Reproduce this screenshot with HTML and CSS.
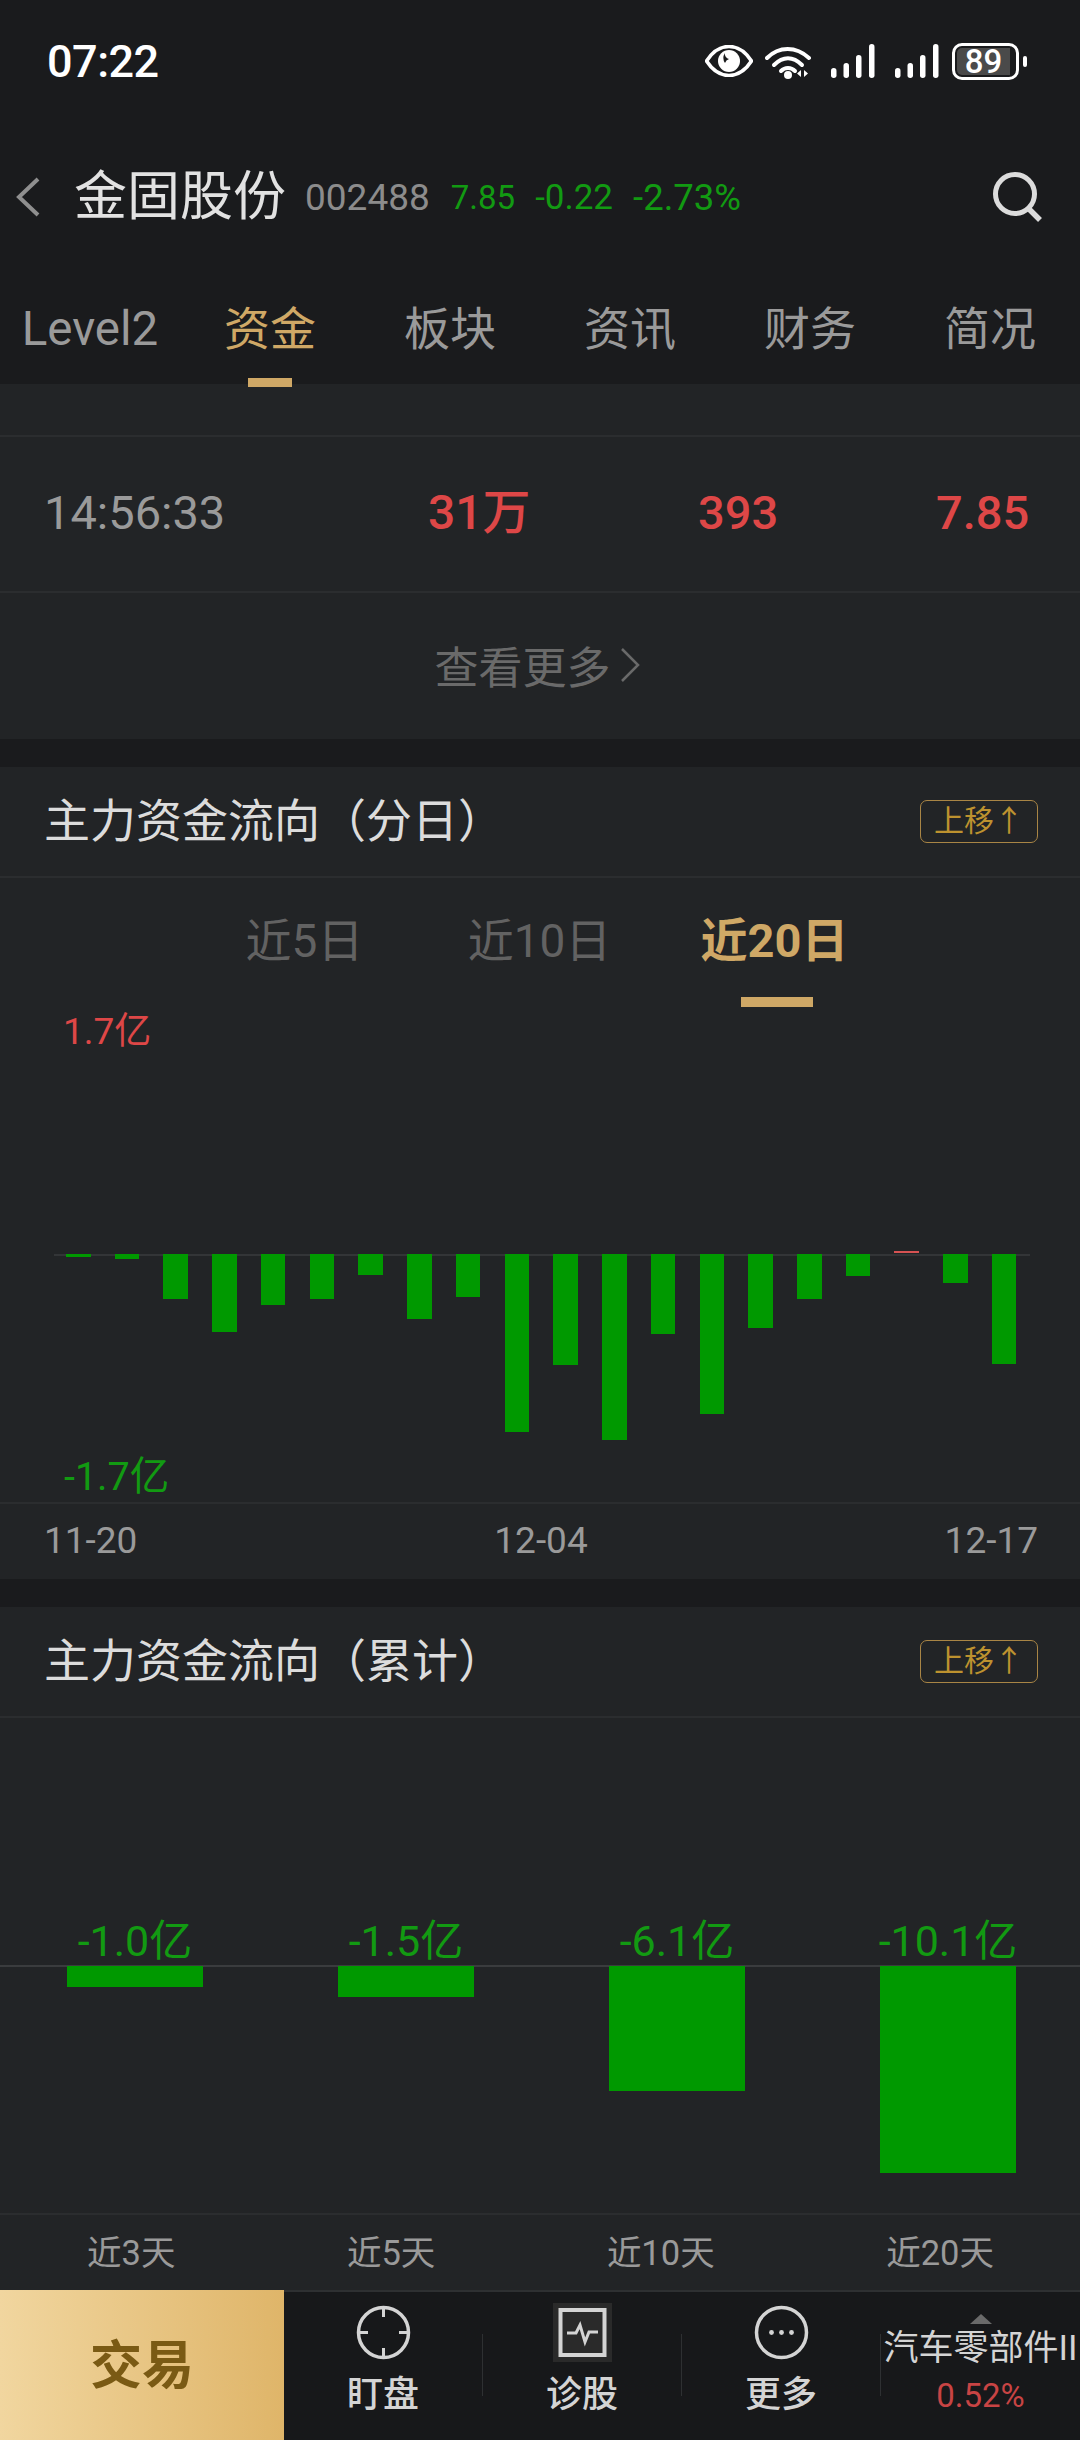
FILE: index.html
```html
<!DOCTYPE html>
<html lang="zh">
<head>
<meta charset="utf-8">
<title>金固股份</title>
<link rel="stylesheet" href="styles.css">
</head>
<body>
<div class="app">
  <header class="top">
    <div class="status">
      <span class="time">07:22</span>
      <div class="status-icons">
        <svg class="i-eye" viewBox="0 0 48 32"><path d="M1.5 16C8 6 15 1.5 24 1.5S40 6 46.500 16C40 26 33 30.500 24 30.500S8 26 1.500 16Z" fill="none" stroke="#fff" stroke-width="3.600"/><circle cx="24" cy="16" r="11" fill="#fff"/><path d="M20 8a9 9 0 0 0 0 10a6 6 0 0 1 4-4a5 5 0 0 1-4-6Z" fill="#1a1b1d"/></svg>
        <svg class="i-wifi" viewBox="0 0 46 35"><g fill="none" stroke="#fff" stroke-width="4" stroke-linecap="round"><path d="M2 14C14 2 31 2 44 14"/><path d="M9 21C18 12 28 12 37 21"/><path d="M16 27C20 23 26 23 30 27"/></g><circle cx="23" cy="31" r="4" fill="#fff"/><path d="M36 26v7l-4-3.500ZM39 26v7l4-3.500Z" fill="#fff"/></svg>
        <svg class="i-sig" viewBox="0 0 44 34"><g fill="#fff"><rect x="0" y="24" width="5.500" height="10" rx="2.700"/><rect x="12.500" y="19" width="5.500" height="15" rx="2.700"/><rect x="25" y="11" width="5.500" height="23" rx="2.700"/><rect x="38" y="0" width="5.500" height="34" rx="2.700"/></g></svg>
        <svg class="i-sig" viewBox="0 0 44 34"><g fill="#fff"><rect x="0" y="24" width="5.500" height="10" rx="2.700"/><rect x="12.500" y="19" width="5.500" height="15" rx="2.700"/><rect x="25" y="11" width="5.500" height="23" rx="2.700"/><rect x="38" y="0" width="5.500" height="34" rx="2.700"/></g></svg>
        <div class="battery"><div class="cell"><span class="pct">89</span></div><i class="nub"></i></div>
      </div>
    </div>
    <div class="stock">
      <svg class="i-back" viewBox="0 0 26 40"><path d="M23 2 4 20l19 18" fill="none" stroke="#8f8f8f" stroke-width="4"/></svg>
      <span class="name">金固股份</span>
      <span class="code">002488</span>
      <span class="quote q1">7.85</span>
      <span class="quote q2">-0.22</span>
      <span class="quote q3">-2.73%</span>
      <svg class="i-search" viewBox="0 0 50 50"><circle cx="22" cy="22" r="19.500" fill="none" stroke="#dcdcdc" stroke-width="5"/><path d="M35 36l12 12" stroke="#dcdcdc" stroke-width="5.500" fill="none"/></svg>
    </div>
    <nav class="tabs">
      <span class="tab latin">Level2</span>
      <span class="tab on">资金</span>
      <span class="tab">板块</span>
      <span class="tab">资讯</span>
      <span class="tab">财务</span>
      <span class="tab">简况</span>
    </nav>
  </header>

  <section class="panel p-trades">
    <div class="row-stub"></div>
    <div class="trade-row">
      <span class="t-time">14:56:33</span>
      <span class="t-vol">31万</span>
      <span class="t-num">393</span>
      <span class="t-price">7.85</span>
    </div>
    <div class="more">查看更多<svg class="i-more" viewBox="0 0 20 34"><path d="M2 1l16 16L2 33" fill="none" stroke="#6a6a6a" stroke-width="2.500"/></svg></div>
  </section>

  <section class="panel p-daily">
    <div class="sec-head"><h2 class="sec-title">主力资金流向（分日）</h2><span class="move">上移↑</span></div>
    <div class="range">
      <span class="range-item">近5日</span>
      <span class="range-item">近10日</span>
      <span class="range-item on">近20日</span>
    </div>
    <div class="day-chart">
      <div class="lab-up">1.7亿</div>
      <div class="axis-wrap">
        <div class="bars">
          <i class="bar" style="height:3px"></i>
          <i class="bar" style="height:5px"></i>
          <i class="bar" style="height:45px"></i>
          <i class="bar" style="height:78px"></i>
          <i class="bar" style="height:51px"></i>
          <i class="bar" style="height:45px"></i>
          <i class="bar" style="height:21px"></i>
          <i class="bar" style="height:65px"></i>
          <i class="bar" style="height:43px"></i>
          <i class="bar" style="height:178px"></i>
          <i class="bar" style="height:111px"></i>
          <i class="bar" style="height:186px"></i>
          <i class="bar" style="height:80px"></i>
          <i class="bar" style="height:160px"></i>
          <i class="bar" style="height:74px"></i>
          <i class="bar" style="height:45px"></i>
          <i class="bar" style="height:22px"></i>
          <i class="bar up" style="height:2px"></i>
          <i class="bar" style="height:29px"></i>
          <i class="bar" style="height:110px"></i>
        </div>
      </div>
      <div class="lab-down">-1.7亿</div>
    </div>
    <div class="dates"><span>11-20</span><span>12-04</span><span>12-17</span></div>
  </section>

  <section class="panel p-total">
    <div class="sec-head"><h2 class="sec-title">主力资金流向（累计）</h2><span class="move">上移↑</span></div>
    <div class="total-chart">
      <div class="cols vals"><span>-1.0亿</span><span>-1.5亿</span><span>-6.1亿</span><span>-10.1亿</span></div>
      <div class="cols blocks">
        <i class="block" style="height:21px"></i>
        <i class="block" style="height:31px"></i>
        <i class="block" style="height:125px"></i>
        <i class="block" style="height:207px"></i>
      </div>
    </div>
    <div class="periods"><span>近3天</span><span>近5天</span><span>近10天</span><span>近20天</span></div>
  </section>

  <footer class="bottom">
    <div class="trade">交易</div>
    <div class="nav-item">
      <svg class="icon" viewBox="0 0 59 59"><circle cx="29.500" cy="29.500" r="25" fill="none" stroke="#d4d4d4" stroke-width="3.500"/><path d="M29.500 4v10M29.500 45v10M4 29.500h10M45 29.500h10" stroke="#d4d4d4" stroke-width="3" fill="none"/></svg>
      <span class="nav-text">盯盘</span>
    </div>
    <i class="sep"></i>
    <div class="nav-item">
      <svg class="icon diag" viewBox="0 0 59 59"><rect x="7.500" y="7" width="44" height="45" fill="none" stroke="#d4d4d4" stroke-width="4"/><path d="M14 30h9l4-8 5 17 4-10h9" fill="none" stroke="#d4d4d4" stroke-width="3"/></svg>
      <span class="nav-text">诊股</span>
    </div>
    <i class="sep"></i>
    <div class="nav-item">
      <svg class="icon" viewBox="0 0 59 59"><circle cx="29.500" cy="29.500" r="25" fill="none" stroke="#d4d4d4" stroke-width="3.500"/><g fill="#d4d4d4"><circle cx="19.500" cy="29.500" r="2.400"/><circle cx="29.500" cy="29.500" r="2.400"/><circle cx="39.500" cy="29.500" r="2.400"/></g></svg>
      <span class="nav-text">更多</span>
    </div>
    <i class="sep"></i>
    <div class="sector">
      <i class="tri"></i>
      <span class="sector-name">汽车零部件II</span>
      <span class="sector-pct">0.52%</span>
    </div>
  </footer>
</div>
</body>
</html>
```

FILE: styles.css
```css
* { box-sizing: border-box; margin: 0; padding: 0; }
html, body { width: 1080px; height: 2440px; overflow: hidden; background: #1a1b1d; }
body { font-family: Roboto, "Noto Sans CJK SC", sans-serif; color: #9a9a9a; }
.app { width: 1080px; height: 2440px; display: flex; flex-direction: column; }

/* header */
.top { height: 384px; display: flex; flex-direction: column; background: #1a1b1d; }
.status { height: 122px; display: flex; align-items: center; justify-content: space-between; padding: 0 53px 0 47px; }
.time { font-size: 45px; font-weight: 500; color: #fff; line-height: 1; letter-spacing: -0.5px; }
.status-icons { display: flex; align-items: center; }
.i-eye { width: 48px; height: 32px; }
.i-wifi { width: 46px; height: 35px; margin-left: 12px; }
.i-sig { width: 44px; height: 34px; margin-left: 20px; }
.battery { display: flex; align-items: center; margin-left: 13px; }
.cell { width: 67px; height: 37px; border: 3px solid #fff; border-radius: 10px; padding: 2px; display: flex; }
.pct { flex: 0 0 53px; background: #4a4a4a; border-radius: 5px 0 0 5px; color: #fff; font-size: 33px; font-weight: 500; line-height: 27px; text-align: center; }
.nub { width: 4px; height: 11px; background: #fff; border-radius: 2px; margin-left: 4px; }

.stock { height: 150px; display: flex; align-items: center; padding-left: 15px; }
.i-back { width: 26px; height: 40px; }
.name { font-size: 53px; color: #e2e2e2; margin-left: 33px; line-height: 60px; }
.code { font-size: 37px; color: #8c8c8c; margin-left: 19px; }
.quote { font-size: 35px; color: #129a12; margin-left: 21px; }
.q1 { font-size: 33px; }
.q2 { margin-left: 20px; }
.q3 { font-size: 36.500px; margin-left: 20px; }
.i-search { width: 50px; height: 50px; margin-left: auto; margin-right: 37px; }

.tabs { height: 112px; display: grid; grid-template-columns: repeat(6, 180px); }
.tab { position: relative; text-align: center; font-size: 46px; line-height: 115px; color: #9a9a9a; }
.tab.latin { font-size: 47.500px; }
.tab.on { color: #cfa866; }
.tab.on::after { content: ""; position: absolute; left: 68px; bottom: 0; width: 44px; height: 9px; background: #cfa866; }

/* panels */
.panel { background: #222426; display: flex; flex-direction: column; }
.p-trades { height: 355px; }
.row-stub { height: 53px; border-bottom: 2px solid #2b2d2f; }
.trade-row { height: 156px; border-bottom: 2px solid #2b2d2f; display: grid; grid-template-columns: 384px 270px 238px auto; align-items: baseline; padding: 48px 0 0 44px; font-size: 47px; line-height: 56px; color: #de4747; font-weight: 500; }
.t-time { color: #9a9a9a; font-weight: 400; font-size: 47px; }
.t-vol { font-size: 48px; }
.more { flex: 1; display: flex; align-items: center; justify-content: center; gap: 9px; font-size: 44px; color: #6a6a6a; padding: 0 6px 3px 0; }
.i-more { width: 20px; height: 34px; }

.p-daily { height: 812px; margin-top: 28px; }
.p-total { height: 683px; margin-top: 28px; }
.sec-head { height: 111px; flex: none; display: flex; align-items: center; justify-content: space-between; padding: 0 42px 0 44px; border-bottom: 2px solid #2b2d2f; }
.sec-title { font-size: 46px; font-weight: 400; color: #dcdcdc; line-height: 60px; margin-bottom: 2px; }
.move { width: 118px; height: 43px; border: 1.500px solid #a98545; border-radius: 7px; color: #bd922f; font-size: 30px; line-height: 39px; text-align: center; }

.range { height: 129px; flex: none; display: grid; grid-template-columns: repeat(3, 235px); padding-left: 187px; }
.range-item { position: relative; text-align: center; font-size: 46px; line-height: 126px; color: #626262; }
.range-item.on { color: #cfa866; font-weight: 700; font-size: 47px; }
.range-item.on::after { content: ""; position: absolute; left: 84px; bottom: 0; width: 72px; height: 10px; background: #cfa866; }

.day-chart { height: 497px; flex: none; display: flex; flex-direction: column; border-bottom: 2px solid #2b2d2f; }
.lab-up { height: 48px; padding: 4px 0 0 63px; font-size: 37px; line-height: 42px; color: #de4747; }
.axis-wrap { height: 200px; margin-top: 199px; margin-left: 54px; width: 976px; border-top: 2px solid #333537; }
.bars { display: flex; align-items: flex-start; gap: 24.240px; margin-top: -2px; padding-left: 12px; }
.bar { width: 24.500px; background: #009900; flex: none; }
.bar.up { background: #d65252; margin-top: -3px; }
.lab-down { margin-top: 2px; padding-left: 64px; font-size: 39.500px; line-height: 42px; color: #129a12; }

.dates { flex: 1; display: flex; justify-content: space-between; align-items: flex-start; padding: 16px 42px 0 44px; font-size: 37px; line-height: 42px; color: #9a9a9a; }

.total-chart { height: 497px; flex: none; padding-top: 202px; border-bottom: 2px solid #2b2d2f; }
.cols { display: grid; grid-template-columns: repeat(4, 136px); column-gap: 135px; padding-left: 67px; }
.vals { height: 47px; border-bottom: 2px solid #3a3c3e; font-size: 43px; line-height: 43px; color: #129a12; text-align: center; white-space: nowrap; }
.vals span { justify-self: center; }
.blocks { align-items: start; margin-top: -1px; }
.block { background: #009900; display: block; }

.periods { flex: 1; display: flex; justify-content: space-between; align-items: center; padding: 0 86px 6px 87px; font-size: 34.500px; color: #9a9a9a; }

/* bottom bar */
.bottom { height: 150px; flex: none; display: flex; background: #17181a; border-top: 2px solid #2e3032; }
.trade { width: 284px; flex: none; background: linear-gradient(90deg, #f1d69f, #dfb569); color: #7a5a14; font-size: 52px; font-weight: 700; text-align: center; line-height: 154px; margin-top: -2px; height: 150px; }
.nav-item { width: 198px; flex: none; display: flex; flex-direction: column; align-items: center; padding-top: 11px; }
.icon { width: 59px; height: 59px; flex: none; }
.icon.diag { background: #2a2a2a; }
.nav-text { margin-top: 11px; font-size: 36px; line-height: 44px; color: #d4d4d4; font-weight: 500; }
.sep { width: 1px; height: 62px; margin-top: 42px; background: #2e3032; flex: none; }
.sector { flex: 1; min-width: 0; display: flex; flex-direction: column; align-items: center; padding-top: 22px; white-space: nowrap; }
.tri { width: 0; height: 0; border-left: 11px solid transparent; border-right: 11px solid transparent; border-bottom: 10px solid #6a6a6a; }
.sector-name { font-size: 35px; line-height: 40px; color: #d4d4d4; margin-top: 5px; }
.sector-pct { font-size: 33px; line-height: 38px; color: #c84444; margin-top: 8px; }
```
